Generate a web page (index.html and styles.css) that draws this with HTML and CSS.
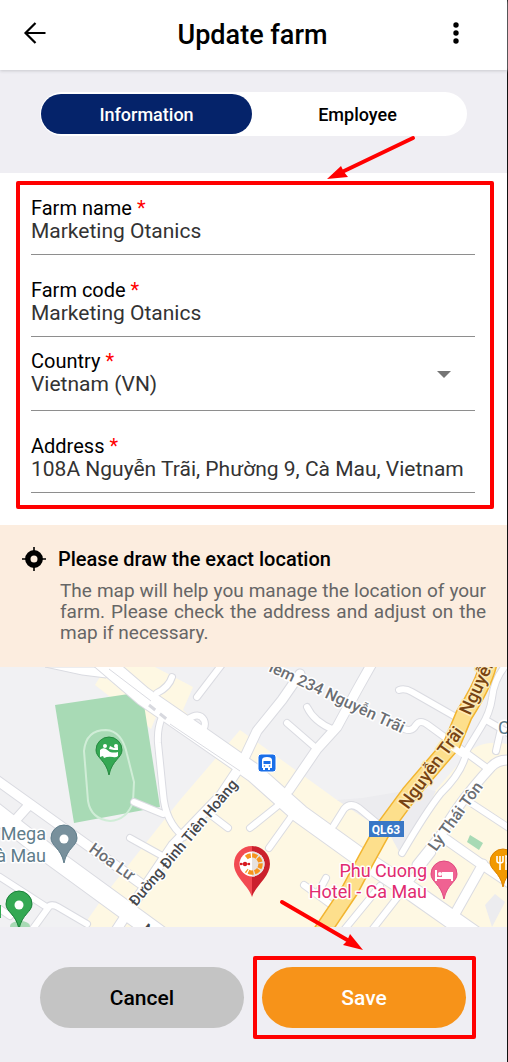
FILE: index.html
```html
<!DOCTYPE html>
<html lang="en">
<head>
<meta charset="utf-8">
<meta name="viewport" content="width=device-width, initial-scale=1">
<title>Update farm</title>
<link rel="stylesheet" href="styles.css">
</head>
<body>
<div class="app">
  <header class="topbar">
    <button class="icon-button" type="button" aria-label="Back">
      <svg width="24" height="24" viewBox="0 0 24 24" fill="none" stroke="#000" stroke-width="2.2"><path d="M22.500 12H3M12.500 2L2.500 12l10 10"/></svg>
    </button>
    <h1 class="title">Update farm</h1>
    <button class="icon-button" type="button" aria-label="More options">
      <svg width="24" height="24" viewBox="0 0 24 24"><circle cx="12" cy="4" r="2.700"/><circle cx="12" cy="12" r="2.700"/><circle cx="12" cy="20" r="2.700"/></svg>
    </button>
  </header>

  <nav class="tabs-area">
    <div class="tabs">
      <button class="tab tab-active" type="button">Information</button>
      <button class="tab" type="button">Employee</button>
    </div>
    <svg class="arrow arrow-form" width="90" height="46" viewBox="0 0 90 46" aria-hidden="true"><path d="M87 3L16 37" stroke="#f00" stroke-width="4" stroke-linecap="round"/><path d="M1 44L15 31l3 6 4 5z" fill="#f00"/></svg>
  </nav>

  <main>
    <section class="form-area">
      <form class="form-box">
        <div class="field">
          <label for="name">Farm name <span class="required">*</span></label>
          <input id="name" type="text" value="Marketing Otanics">
        </div>
        <div class="field">
          <label for="code">Farm code <span class="required">*</span></label>
          <input id="code" type="text" value="Marketing Otanics">
        </div>
        <div class="field field-select">
          <label for="country">Country <span class="required">*</span></label>
          <select id="country"><option>Vietnam (VN)</option></select>
          <svg class="caret" width="14" height="7" viewBox="0 0 14 7" aria-hidden="true"><path d="M0 0h14L7 7z" fill="#757575"/></svg>
        </div>
        <div class="field">
          <label for="address">Address <span class="required">*</span></label>
          <input id="address" type="text" value="108A Nguyễn Trãi, Phường 9, Cà Mau, Vietnam">
        </div>
      </form>
    </section>

    <section class="notice">
      <svg class="target" width="24" height="24" viewBox="0 0 24 24" aria-hidden="true"><circle cx="12" cy="12" r="6.200" fill="none" stroke="#000" stroke-width="5.400"/><path d="M12 0v4M12 20v4M0 12h4M20 12h4" stroke="#000" stroke-width="1.600"/></svg>
      <div class="notice-body">
        <h2>Please draw the exact location</h2>
        <p>The map will help you manage the location of your farm. Please check the address and adjust on the map if necessary.</p>
      </div>
    </section>

    <section class="map" aria-label="Map">
      <svg class="map-canvas" viewBox="0 0 507 260" preserveAspectRatio="xMidYMid slice">
        <defs>
          <g id="roads" fill="none" stroke-linecap="round" stroke-linejoin="round">
            <g class="w6">
              <path d="M162 50Q157 62 158 76L163 126Q165 155 184 170M134 135l29 12M157 26q12-6 15-16M197 30l26-34M187 53q12-9 17 0 3 6-4 14"/>
              <path d="M207 145l21 16M130 171l36 20M287 56l30 26M307 40q7 15 27 23M399 23q6-2 13 2l42 24M401 60q10 7 15-2 4-6 12 0l59 43"/>
              <path d="M506-2q-12 14-14 33-2 15-11 29l-14 23q-4 22-26 43-15 19-39 60M486 53l24 14M501 62l-5 22"/>
              <path d="M471 136l38 25M250 161l30-24M269 181l25-35M334 158l10-16q6-7 15-1l18 15M304 218l26 19M326 211l-8 15"/>
              <path d="M344 263l36-44M372 263l60-77M0 210l48 31-16 22M47 241q4-5 11-1l29 17M0 242l10 7"/>
            </g>
            <g class="w9">
              <path d="M-5 112l35 25 110 79M29 138l-17 19M115 265l17-26 41-61 48-50 20-30 16-34 25-31 18-26M289 123l28-41 20-22 20-37 18-32M510 93q-12-1-19 7-34 37-50 68l-24 30M444 171l37 26 30 20M483 197l-31 55"/>
            </g>
            <g class="w18">
              <path d="M-10 141l60 47 37 27 74 54M101-7l42 36 58 40 53 37 46 41 57 41 57 38 67 47"/>
            </g>
          </g>
        </defs>
        <rect width="507" height="260" fill="#f1f1f3"/>
        <path d="M240 63L180 133 107 225 88 252V260H507V77Q480 72 466 88L430 130 400 163 337 133 254 73z" fill="#fef8e3"/>
        <path d="M116 0H155L193 20 183 43 215 72 150 30zM101 8L95 18 151 62 158 45z" fill="#fef8e3"/>
        <path d="M337 133l25-2 60-10 14 3-34 66-12-22zM485 238l10-11 10 8-13 25z" fill="#ececef"/>
        <path d="M55 38L142 25 160 140 74 156z" fill="#a8dab5"/>
        <path d="M88 134L84 84Q86 63 106 63 122 64 127 87L134 115 133 135Q127 153 110 154 91 152 88 134z" fill="none" stroke="#d0edd7" stroke-width="2"/>
        <path d="M470 168l13 8-4 7-12-8z" fill="#a8dab5"/>
        <path d="M45 0h70l-9 11-24-3z" fill="#fff" stroke="#dadbe1"/>
        <use href="#roads" class="casing"/>
        <use href="#roads" class="surface"/>
        <path d="M109 2l42 32M170 57l70 47" stroke="#dadbe1" stroke-width="1" fill="none"/>
        <path d="M149 38l20 16" stroke="#d8d9df" stroke-width="3" stroke-dasharray="8 6" fill="none"/>
        <path d="M489-5Q484 17 464 48L452 77 410 126 382 164 366 193 350 223 321 266" fill="none" stroke="#f2b530" stroke-width="18"/>
        <path d="M489-5Q484 17 464 48L452 77 410 126 382 164 366 193 350 223 321 266" fill="none" stroke="#fddf8c" stroke-width="15"/>
        <path d="M452 80l15 10" stroke="#fff" stroke-width="6"/>

        <g class="map-text">
          <text class="street" transform="translate(268 4) rotate(25)">iềm 234 Nguyễn Trãi</text>
          <text class="highway" transform="translate(408 143) rotate(-54)">Nguyễn Trãi</text>
          <text class="highway" transform="translate(470 49) rotate(-65)">Nguyễn</text>
          <text class="street dark" transform="translate(136 240) rotate(-50)">Đường Đinh Tiên Hoàng</text>
          <text class="street" transform="translate(88 184) rotate(36)">Hoa Lư</text>
          <text class="street" transform="translate(436 185) rotate(-54)">Lý Thái Tôn</text>
          <text class="street dark" transform="translate(141 264) rotate(38)">Nguyễn</text>
          <text class="place" x="46" y="173" text-anchor="end">Mega</text>
          <text class="place" x="46" y="195" text-anchor="end">Cà Mau</text>
          <text class="place" x="498" y="67">C</text>
          <text class="hotel" x="427" y="210" text-anchor="end">Phu Cuong</text>
          <text class="hotel" x="427" y="231" text-anchor="end">Hotel - Ca Mau</text>
        </g>
        <rect x="369" y="154" width="35" height="16" fill="#3977c6"/>
        <text class="route" x="386" y="167" text-anchor="middle">QL63</text>

        <rect x="258" y="87" width="18" height="18" rx="3" fill="#1a6fe8" stroke="#fff" stroke-width="1"/>
        <path d="M262 93q0-3 5-3t5 3v8h-2v2h-2v-2h-3v2h-2v-2h-1z" fill="#fff"/>
        <path d="M263.500 94h7v3h-7z" fill="#1a6fe8"/><circle cx="264.500" cy="99" r=".8" fill="#1a6fe8"/><circle cx="269.500" cy="99" r=".8" fill="#1a6fe8"/>

        <g transform="translate(109 84)"><path d="M0 24C-3 9-13 7-13-1a13 13 0 0 1 26 0C13 7 3 9 0 24z" fill="#34a853" stroke="#24883e"/><circle cx="-4" cy="-5" r="2" fill="#fff"/><circle cx="7" cy="-5" r="2" fill="#fff"/><path d="M-9-1q3-3 6-1l4 3q4 1 8 0v4q-2 2-5 1-5-1-9 1l-1-2-3 1zM0-2l5 1h4v-3l-4 1-4-2z" fill="#fff"/></g>
        <g transform="translate(64 172)"><path d="M0 24C-3 9-13 7-13-1a13 13 0 0 1 26 0C13 7 3 9 0 24z" fill="#78909c" stroke="#607d8b"/><circle r="4.500" fill="#fff"/></g>
        <ellipse cx="20" cy="259" rx="10" ry="5" fill="#a8dab5"/>
        <g transform="translate(19 238)"><path d="M0 24C-3 9-13 7-13-1a13 13 0 0 1 26 0C13 7 3 9 0 24z" fill="#34a853" stroke="#188038"/><circle r="4.500" fill="#fff"/></g>
        <path d="M0 238v13" stroke="#34a853" stroke-width="2"/>
        <g transform="translate(444 208)"><path d="M0 24C-3 9-13 7-13-1a13 13 0 0 1 26 0C13 7 3 9 0 24z" fill="#f06292" stroke="#e04880"/><path d="M-8-5v11M-8 3H8M8 6V-2H-1V2" fill="none" stroke="#fff" stroke-width="2"/><path d="M-1-3h7q2 0 2 3v3h-9z" fill="#fff"/><circle cx="-4" cy="-1" r="2" fill="#fff"/></g>
        <g transform="translate(503 196)"><path d="M0 24C-3 9-13 7-13-1a13 13 0 0 1 26 0C13 7 3 9 0 24z" fill="#f29900" stroke="#dc8200"/><path d="M-6-7v5q0 2 3 2t3-2v-5M-3-7V7M3 7V-7q4 1 4 7H3" fill="none" stroke="#fff" stroke-width="1.600"/></g>
        <g transform="translate(252 197)">
          <path d="M0 33C-3 22-18 13-18 0A18 18 0 0 1 0-18z" fill="#f24a52"/>
          <path d="M0 33C3 22 18 13 18 0A18 18 0 0 0 0-18z" fill="#cb202d"/>
          <circle r="12.500" fill="#fff"/>
          <path d="M0-12.500A12.500 12.500 0 0 1 0 12.500z" fill="#e6e2df"/>
          <path d="M-5.700-6.500A8.600 8.600 0 1 1-5.700 6.500" fill="none" stroke="#f7941d" stroke-width="4.400" stroke-dasharray="5 1.300"/>
          <path d="M-12 0H-2" stroke="#d71920" stroke-width="1.200"/>
          <circle cx="-7" r="2.200" fill="#d71920"/><circle cx="-11" r="1.200" fill="#d71920"/><circle cx="-3" r="1.200" fill="#d71920"/>
        </g>
      </svg>
    </section>
  </main>

  <footer class="actions">
    <button class="action action-cancel" type="button">Cancel</button>
    <div class="save-slot"><button class="action action-save" type="button">Save</button></div>
    <svg class="arrow arrow-save" width="86" height="54" viewBox="0 0 86 54" aria-hidden="true"><path d="M3 3L70 42" stroke="#f00" stroke-width="4" stroke-linecap="round"/><path d="M84 51L64 46l4-4 3-7z" fill="#f00"/></svg>
  </footer>
</div>
</body>
</html>
```
FILE: styles.css
```css
* {
  box-sizing: border-box;
}

body {
  margin: 0;
  background: #efeef3;
  color: #000;
  font-family: Roboto, "Noto Sans", sans-serif;
}

button,
input,
select {
  margin: 0;
  padding: 0;
  border: 0;
  background: none;
  color: inherit;
  font: inherit;
}

h1,
h2,
p {
  margin: 0;
}

.app {
  display: flex;
  flex-direction: column;
  min-height: 100vh;
  border-right: 1px solid #111;
}

.topbar {
  position: relative;
  display: flex;
  align-items: center;
  height: 70px;
  padding: 0 39px 4px 23px;
  background: #fff;
  box-shadow: 0 1px 3px #c8c8ce;
}

.icon-button {
  display: flex;
}

.title {
  flex: 1;
  padding: 4px 0 0 14px;
  font-size: 27px;
  font-weight: 500;
  line-height: 32px;
  text-align: center;
}

.tabs-area {
  position: relative;
  padding: 22px 40px 37px;
}

.tabs {
  display: flex;
  padding: 2px 4px 2px 1px;
  border-radius: 22px;
  background: #fff;
}

.tab {
  flex: 1;
  height: 40px;
  border-radius: 20px;
  font-size: 18px;
  font-weight: 500;
}

.tab-active {
  background: #05236a;
  color: #fff;
}

.arrow {
  position: absolute;
  z-index: 1;
  fill: none;
}

.arrow-form {
  right: 91px;
  bottom: -8px;
}

.form-area {
  padding: 8px 13px 16px 16px;
  background: #fff;
}

.form-box {
  padding: 12px 15px 12px 11px;
  border: 4px solid #f00;
  border-radius: 2px;
}

.field {
  display: flex;
  flex-direction: column;
  padding-bottom: 11px;
  border-bottom: 1px solid #8e8e8e;
}

.field + .field {
  margin-top: 24px;
}

.field label {
  font-size: 20px;
  line-height: 22px;
}

.field input,
.field select {
  width: 100%;
  height: 24px;
  color: #333;
  font-size: 21px;
  line-height: 24px;
  appearance: none;
}

.required {
  color: #f00;
}

.field + .field-select {
  position: relative;
  margin-top: 13px;
  padding-bottom: 14px;
}

.caret {
  position: absolute;
  top: 21px;
  right: 24px;
}

.notice {
  display: flex;
  gap: 12px;
  padding: 22px 21px 24px 22px;
  background: #fceddf;
}

.target {
  flex: none;
}

.notice-body {
  flex: 1;
}

.notice h2 {
  font-size: 20px;
  font-weight: 500;
  line-height: 24px;
}

.notice p {
  padding: 9px 0 0 2px;
  color: #666;
  font-size: 19px;
  line-height: 21px;
  text-align: justify;
}

.map {
  height: 260px;
}

.map-canvas {
  display: block;
  width: 100%;
  height: 100%;
}

.casing {
  stroke: #dadbe1;
  --grow: 2px;
}

.surface {
  stroke: #fff;
  --grow: 0px;
}

.w6 {
  stroke-width: calc(6px + var(--grow));
}

.w9 {
  stroke-width: calc(9px + var(--grow));
}

.w18 {
  stroke-width: calc(18px + var(--grow));
}

.map-text {
  stroke: #fff;
  stroke-width: 3px;
  stroke-linejoin: round;
  paint-order: stroke;
}

.street {
  fill: #6b6e73;
  font-size: 16px;
  font-weight: 500;
}

.dark {
  fill: #45474b;
  font-size: 15px;
}

.highway {
  fill: #774312;
  stroke: #fdebb9;
  font-size: 18px;
  font-weight: 500;
}

.place {
  fill: #607d8b;
  font-size: 18px;
}

.hotel {
  fill: #e12b70;
  font-size: 18px;
}

.route {
  fill: #fff;
  font-size: 12px;
  font-weight: 700;
}

.actions {
  position: relative;
  display: grid;
  grid-template-columns: 1fr 1fr;
  gap: 18px;
  padding: 40px 41px 34px 40px;
}

.action {
  width: 100%;
  height: 61px;
  border-radius: 31px;
  font-size: 21px;
  font-weight: 500;
}

.action-cancel {
  background: #c4c4c4;
}

.action-save {
  background: #f79319;
  color: #fff;
}

.save-slot {
  position: relative;
}

.save-slot::after {
  content: "";
  position: absolute;
  inset: -11px -10px -11px -9px;
  border: 4px solid #f00;
  border-radius: 2px;
  pointer-events: none;
}

.arrow-save {
  top: -28px;
  right: 142px;
}
```
